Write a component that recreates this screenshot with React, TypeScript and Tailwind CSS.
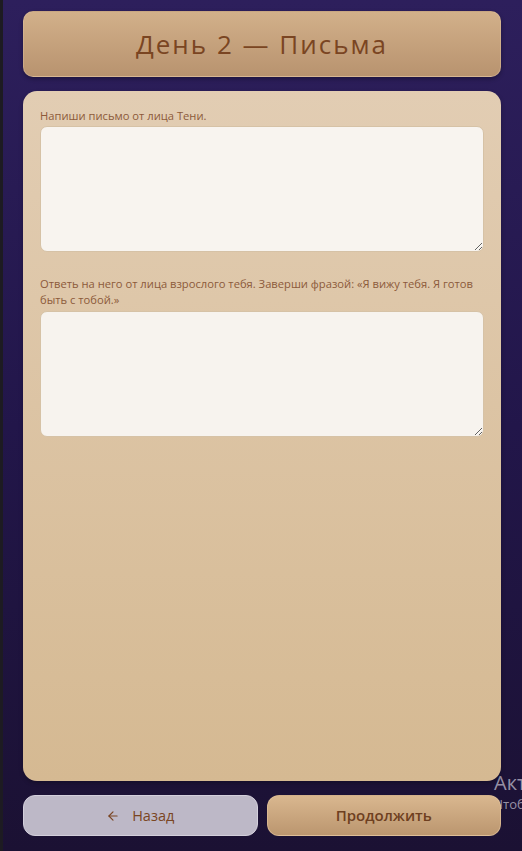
import React from "react";
import { ArrowLeft } from "lucide-react";

export default function App() {
  return (
    <div
      className="relative flex w-[522px] h-[851px] overflow-hidden bg-gradient-to-b from-[#2d1f5c] via-[#22164a] to-[#1b1133]"
      style={{ fontFamily: '"Open Sans", "Noto Sans", sans-serif' }}
    >
      <div className="absolute left-[494px] top-[771px] text-[20px] leading-[24px] text-[#b8b4c4]/80 whitespace-nowrap">
        Акт
      </div>
      <div className="absolute left-[494px] top-[796px] text-[13px] leading-[16px] text-[#b8b4c4]/80 whitespace-nowrap">
        Чтоб
      </div>
      <div className="relative w-[3px] shrink-0 bg-[#1d1b22]" />
      <div className="relative flex-1 flex flex-col pl-[20px] pr-[21px] pt-[11px] pb-[15px]">
        <div className="h-[66px] shrink-0 flex items-center justify-center rounded-[10px] bg-gradient-to-b from-[#d2b08a] to-[#b8936f] shadow-[0_2px_4px_rgba(0,0,0,0.3)] border border-[#e0c4a0]/40">
          <h1 className="text-[26px] tracking-[2px] text-[#7a4522] leading-none">
            День 2 — Письма
          </h1>
        </div>
        <div className="mt-[14px] flex-1 rounded-[14px] bg-gradient-to-b from-[#e2cdb3] to-[#d5b992] px-[17px] pt-[17px] flex flex-col shadow-[0_2px_4px_rgba(0,0,0,0.25)]">
          <label className="text-[11.2px] leading-[16px] text-[#8c5a3a]">
            Напиши письмо от лица Тени.
          </label>
          <textarea className="mt-[2px] h-[126px] w-full rounded-[7px] bg-[#f8f4ef] border border-[#d6c2a6] resize-y outline-none" />
          <label className="mt-[24px] text-[11.2px] leading-[16px] text-[#8c5a3a]">
            Ответь на него от лица взрослого тебя. Заверши фразой: «Я вижу тебя. Я готов быть с тобой.»
          </label>
          <textarea className="mt-[3px] h-[126px] w-full rounded-[7px] bg-[#f7f3ee] border border-[#d6c2a6] resize-y outline-none" />
        </div>
        <div className="mt-[14px] h-[41px] shrink-0 flex gap-[9px]">
          <button className="flex-1 rounded-[12px] bg-[#bdb8c7] border border-[#d3cfdb] flex items-center justify-center gap-[12px] text-[14.5px] text-[#7a4522]">
            <ArrowLeft size={14} strokeWidth={2} />
            <span>Назад</span>
          </button>
          <button className="flex-1 rounded-[12px] bg-gradient-to-b from-[#d9b78f] to-[#bb966f] border border-[#e2c39c]/60 flex items-center justify-center text-[15px] font-semibold text-[#6e3f20]">
            Продолжить
          </button>
        </div>
      </div>
    </div>
  );
}
